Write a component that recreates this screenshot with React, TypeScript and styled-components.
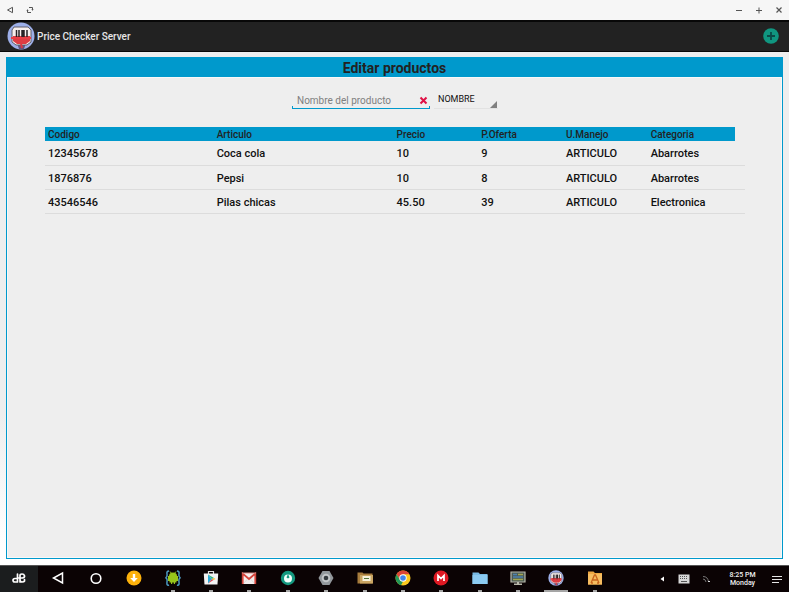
import React, { useState } from "react";
import styled, { createGlobalStyle } from "styled-components";

const GlobalStyle = createGlobalStyle`
  *, *::before, *::after { box-sizing: border-box; }
  body { margin: 0; font-family: Roboto, "Noto Sans", sans-serif; background: #eeeeee; }
  button, input, select { font: inherit; color: inherit; }
  svg { display: block; }
`;

const blue = "#0099cc";

const Screen = styled.div`
  min-height: 100vh;
  display: flex;
  flex-direction: column;
  background: linear-gradient(#eeeeee 70%, #ffffff 92%);
`;

const PlainButton = styled.button`
  display: flex;
  align-items: center;
  justify-content: center;
  padding: 0;
  border: 0;
  background: none;
  cursor: pointer;
`;

const WindowBar = styled.header`
  height: 20px;
  flex: none;
  display: flex;
  align-items: center;
  justify-content: space-between;
  padding: 0 5px;
  background: #f6f6f6;
  color: #555555;
`;

const WindowGroup = styled.div`
  display: flex;
  gap: 10px;
`;

const WindowButton = styled(PlainButton)`
  width: 10px;
  height: 18px;
`;

const AppBar = styled.div`
  height: 32px;
  flex: none;
  display: flex;
  align-items: center;
  gap: 2px;
  padding: 0 10px 1px 7px;
  background: #222222;
  border-top: 2px solid #080808;
  border-bottom: 1px solid #080808;
`;

const AppTitle = styled.h1`
  margin: 0;
  padding-top: 2px;
  flex: 1;
  font-size: 10px;
  line-height: 12px;
  font-weight: 500;
  color: #e6e6e6;
`;

const Main = styled.main`
  flex: 1;
  display: flex;
  flex-direction: column;
  margin: 5px 6px 6px;
  border: 1px solid ${blue};
  background: #eeeeee;
`;

const PageTitle = styled.h2`
  margin: 0;
  height: 19px;
  line-height: 21px;
  background: ${blue};
  color: #222222;
  font-size: 14px;
  font-weight: 700;
  text-align: center;
`;

const PanelBody = styled.div`
  flex: 1;
  border: 1px solid #f8f8f8;
  padding: 14px 36px 14px 37px;
`;

const SearchForm = styled.form`
  display: flex;
  justify-content: center;
  gap: 4px;
  margin-bottom: 18px;
`;

const SearchField = styled.div`
  width: 138px;
  height: 17px;
  display: flex;
  align-items: center;
  border: 1px solid ${blue};
  border-top: 0;
  border-image: linear-gradient(transparent 85%, ${blue} 85%) 1;
`;

const SearchInput = styled.input`
  flex: 1;
  min-width: 0;
  height: 16px;
  padding: 0 4px;
  border: 0;
  outline: 0;
  background: none;
  font-size: 10px;
  color: #333333;
  &::placeholder { color: #808080; opacity: 1; }
`;

const ClearButton = styled(PlainButton)`
  width: 11px;
  height: 15px;
`;

const SelectWrap = styled.div`
  width: 64px;
  height: 17px;
  display: flex;
  align-items: flex-end;
  border-bottom: 1px solid #e2e2e2;
`;

const FieldSelect = styled.select`
  flex: 1;
  min-width: 0;
  height: 17px;
  padding: 0 0 1px 4px;
  border: 0;
  outline: 0;
  appearance: none;
  background: none;
  font-size: 9px;
  color: #111111;
`;

const ProductTable = styled.table`
  width: 100%;
  table-layout: fixed;
  border-collapse: collapse;
  text-align: left;
`;

const Col = styled.col<{ $width: string }>`
  width: ${(p) => p.$width};
`;

const HeadCell = styled.th`
  height: 14px;
  padding: 1px 3px 0;
  background: ${blue};
  color: #222222;
  font-size: 10px;
  line-height: 13px;
  font-weight: 500;
`;

const EndCell = styled.td`
  padding: 0;
`;

const Row = styled.tr`
  border-bottom: 1px solid #dcdcdc;
`;

const Cell = styled.td`
  height: 24px;
  padding: 2px 3px 0;
  font-size: 11px;
  line-height: 21px;
  font-weight: 500;
  color: #111111;
  white-space: nowrap;
`;

const TaskBar = styled.footer`
  height: 27px;
  flex: none;
  display: flex;
  background: #0b0304;
  border-top: 1px solid #555555;
`;

const TaskList = styled.nav`
  flex: 614;
  display: grid;
  grid-template-columns: repeat(16, 1fr);
`;

const TaskButton = styled(PlainButton)<{ $state?: "start" | "open" | "active" }>`
  position: relative;
  padding-bottom: 2px;
  background: ${(p) => (p.$state === "start" ? "#1b1d1e" : "none")};
  &::after {
    content: "";
    display: ${(p) => (p.$state === "open" || p.$state === "active" ? "block" : "none")};
    position: absolute;
    bottom: 0;
    width: ${(p) => (p.$state === "active" ? 24 : 4)}px;
    height: 2px;
    background: #a5a5a5;
  }
`;

const Tray = styled.div`
  flex: 171;
  display: flex;
  align-items: center;
  justify-content: flex-end;
  padding-right: 4px;
  color: #f0f0f0;
`;

const TrayButton = styled(PlainButton)<{ $width: number }>`
  width: ${(p) => p.$width}px;
  height: 26px;
`;

const Clock = styled.div`
  width: 51px;
  text-align: center;
  font-size: 7px;
  line-height: 8px;
  font-weight: 500;
`;

function ScannerLogo({ size }: { size: number }) {
  return (
    <svg width={size} height={size} viewBox="0 0 28 28" aria-hidden="true">
      <circle cx="14" cy="14" r="13.500" fill="#9dafe9" />
      <path d="M10 21h9l-2 6q-3 1-5 0z" fill="#65557c" />
      <path d="M7 5h14l3 3v12l-4 3H9l-4-3V8z" fill="#f7efee" stroke="#605f68" />
      <path d="M6 14h17v5l-4 3h-9l-4-3z" fill="#de3d43" />
      <path d="M9.500 8v9M12 8v9M20 8v9" stroke="#292326" strokeWidth="1.500" />
      <path d="M16 8v9" stroke="#292326" strokeWidth="3.500" />
      <path d="M4 16h20" stroke="#e93d45" strokeWidth="2" />
      <path d="M14 22l1 4" stroke="#dc3944" strokeWidth="2" />
    </svg>
  );
}

const icon = (children: React.ReactNode, size = 16) => (
  <svg width={size} height={size} viewBox="0 0 16 16" fill="none" aria-hidden="true">
    {children}
  </svg>
);

type Task = { name: string; state?: "start" | "open" | "active"; art: React.ReactNode };

const tasks: Task[] = [
  {
    name: "Inicio",
    state: "start",
    art: icon(
      <g stroke="#fff" strokeWidth="1.700" strokeLinecap="round" strokeLinejoin="round">
        <path d="M6.500 4v8M6.500 12H4Q2 12 2 10.300T4 8.500h2.500" />
        <path d="M9 12V5.500Q9 4 11 4t2.500 1.700T11.500 8H7M9 10q0 2 2 2t2.500-1V9.500" />
      </g>
    ),
  },
  { name: "Atrás", art: icon(<path d="M12.500 3v10L3.500 8z" stroke="#fff" strokeWidth="1.500" />) },
  { name: "Pantalla principal", art: icon(<circle cx="8" cy="8.500" r="4.800" stroke="#fff" strokeWidth="1.600" />) },
  {
    name: "Descargas",
    art: icon(
      <>
        <circle cx="8" cy="8" r="7.500" fill="#fcb10b" />
        <path d="M6.800 4h2.400v4h2.600L8 12 4.200 8h2.600z" fill="#fff" />
      </>
    ),
  },
  {
    name: "Editor Android",
    state: "open",
    art: icon(
      <>
        <path d="M4 1Q1.500 1 2 4t-1.500 4Q2.500 8 2 12t2 3M12 1q2.500 0 2 3t1.500 4Q13.500 8 14 12t-2 3" stroke="#4c9bc2" strokeWidth="1.500" />
        <path d="M4 6q0-3.500 4-3.500T12 6h1v5h-1.500v1.500H10V14H8.800v-1.500H7.200V14H6v-1.500H4.500V11H3V6z" fill="#98c51b" />
        <path d="M5 1.500L6.200 3M11 1.500L9.800 3" stroke="#98c51b" />
      </>
    ),
  },
  {
    name: "Tienda",
    state: "open",
    art: icon(
      <>
        <path d="M5.500 4V1.500h5V4" stroke="#ddd" strokeWidth="1.200" />
        <path d="M.8 3.500h14.400l-.7 11h-13z" fill="#f3f3f3" />
        <path d="M5 4.500v9l4-4.500z" fill="#2aaad8" />
        <path d="M5 4.500l6 3.500-2 1z" fill="#34b57a" />
        <path d="M5 13.500l4-4.500 1.500 1z" fill="#df4450" />
        <path d="M9 9l2-1 1.500 1-2 1z" fill="#fbc02d" />
      </>
    ),
  },
  {
    name: "Correo",
    state: "open",
    art: icon(
      <>
        <path d="M1 3h14v11H1z" fill="#f4eeee" />
        <path d="M1.700 14V3.600L8 9l6.300-5.400V14" stroke="#d4443b" strokeWidth="1.800" />
        <path d="M1 3h14" stroke="#d98a85" />
        <path d="M3 13l3.500-4M13 13L9.500 9" stroke="#ddd" />
      </>
    ),
  },
  {
    name: "Seguridad",
    state: "open",
    art: icon(
      <>
        <circle cx="8" cy="8" r="7.200" fill="#14987f" />
        <circle cx="8" cy="8.500" r="4" fill="#f2fffc" />
        <path d="M6.500 7.500L8 4l1.500 3.500L8 8.500z" fill="#14987f" />
      </>
    ),
  },
  {
    name: "Ajustes",
    state: "open",
    art: icon(
      <>
        <path d="M4.500 1h7L15.500 8l-4 7h-7L.5 8z" fill="#92979b" />
        <circle cx="8" cy="8" r="4.300" fill="#c2c5c7" />
        <circle cx="8" cy="8" r="2.300" fill="#343a3e" />
      </>
    ),
  },
  {
    name: "Explorador",
    state: "open",
    art: icon(
      <>
        <path d="M.5 2.500h5l1 1h9v10H.5z" fill="#a87d3d" />
        <path d="M3 5h13v8.500H3z" fill="#c9a563" />
        <path d="M5.500 6h8v5h-8z" fill="#f8f3dd" />
        <path d="M7 8.500h5" stroke="#55763f" />
      </>
    ),
  },
  {
    name: "Chrome",
    state: "open",
    art: icon(
      <>
        <circle cx="8" cy="8" r="7.500" fill="#fbc91f" />
        <path d="M1.500 4.300A7.500 7.500 0 0 1 14.500 4.300H8L5 9.500z" fill="#dc4437" />
        <path d="M1.500 4.300L5 9.700l3 1.800-2 3.700A7.500 7.500 0 0 1 1.500 4.300" fill="#219758" />
        <circle cx="8" cy="8" r="3.700" fill="#fff" />
        <circle cx="8" cy="8" r="2.800" fill="#4386ed" />
      </>
    ),
  },
  {
    name: "Mega",
    state: "open",
    art: icon(
      <>
        <circle cx="8" cy="8" r="7.500" fill="#de1923" />
        <path d="M5 11V5.500l3 3 3-3V11" stroke="#fff" strokeWidth="1.700" />
      </>
    ),
  },
  {
    name: "Archivos",
    state: "open",
    art: icon(
      <>
        <path d="M.5 2.500h6l1.500 1.500h7.500v10H.5z" fill="#78bae4" />
        <path d="M.5 5h15v9H.5z" fill="#8bcaf1" />
      </>
    ),
  },
  {
    name: "Monitor",
    state: "open",
    art: icon(
      <>
        <path d="M1 2h14v10H1z" fill="#4b5a55" stroke="#b8b8aa" strokeWidth="1.200" />
        <path d="M3 4.500h4M3 7h10" stroke="#4d82ae" strokeWidth="1.500" />
        <path d="M3 9.500h10M8 4.500h5" stroke="#a3a750" strokeWidth="1.500" />
        <path d="M7 12h2v1.500h3V15H4v-1.500h3z" fill="#b8b8aa" />
      </>
    ),
  },
  { name: "Price Checker Server", state: "active", art: <ScannerLogo size={16} /> },
  {
    name: "Carpeta de aplicaciones",
    state: "open",
    art: icon(
      <>
        <path d="M1 1.500h5.500L8 3h7v11.500H1z" fill="#efa842" />
        <path d="M1 4h14v10.500H1z" fill="#f7bd60" />
        <path d="M4 13l3.500-8h1L12 13M5.500 10h5M4 13h2M10 13h2" stroke="#c8641c" strokeWidth="1.300" />
      </>
    ),
  },
];

const columns = ["Codigo", "Articulo", "Precio", "P.Oferta", "U.Manejo", "Categoria"];
const widths = ["24.1%", "25.7%", "12.1%", "12.1%", "12.1%", "auto"];
const products = [
  ["12345678", "Coca cola", "10", "9", "ARTICULO", "Abarrotes"],
  ["1876876", "Pepsi", "10", "8", "ARTICULO", "Abarrotes"],
  ["43546546", "Pilas chicas", "45.50", "39", "ARTICULO", "Electronica"],
];

export default function App() {
  const [query, setQuery] = useState("");
  const [field, setField] = useState("NOMBRE");
  const column = field === "NOMBRE" ? 1 : 0;
  const visible = products.filter((p) => p[column].toLowerCase().includes(query.toLowerCase()));

  return (
    <Screen>
      <GlobalStyle />
      <WindowBar>
        <WindowGroup>
          <WindowButton aria-label="Atrás">
            <svg width="8" height="8" viewBox="0 0 8 8" fill="none" stroke="currentColor">
              <path d="M6.500 1.300v5.400L1.500 4z" />
            </svg>
          </WindowButton>
          <WindowButton aria-label="Girar ventana">
            <svg width="8" height="8" viewBox="0 0 8 8" fill="none" stroke="currentColor">
              <path d="M3 1.500h3.500V4M5 6.500H1.500V4" />
              <path d="M5.500 3.500l1 1 1-1M.5 4.500l1-1 1 1" strokeWidth="0.600" />
            </svg>
          </WindowButton>
        </WindowGroup>
        <WindowGroup>
          <WindowButton aria-label="Minimizar">
            <svg width="8" height="8" viewBox="0 0 8 8" stroke="currentColor"><path d="M1 4.500h6" /></svg>
          </WindowButton>
          <WindowButton aria-label="Maximizar">
            <svg width="8" height="8" viewBox="0 0 8 8" stroke="currentColor"><path d="M1 4.500h6M4 1.500v6" /></svg>
          </WindowButton>
          <WindowButton aria-label="Cerrar">
            <svg width="8" height="8" viewBox="0 0 8 8" stroke="currentColor"><path d="M1.500 1.500l5 5M6.500 1.500l-5 5" strokeWidth="1.200" /></svg>
          </WindowButton>
        </WindowGroup>
      </WindowBar>

      <AppBar>
        <ScannerLogo size={28} />
        <AppTitle>Price Checker Server</AppTitle>
        <PlainButton aria-label="Agregar producto">
          <svg width="16" height="16" viewBox="0 0 16 16">
            <circle cx="8" cy="8" r="7.800" fill="#109680" />
            <path d="M8 4v8M4 8h8" stroke="#0b4a47" strokeWidth="1.800" />
          </svg>
        </PlainButton>
      </AppBar>

      <Main>
        <PageTitle>Editar productos</PageTitle>
        <PanelBody>
          <SearchForm onSubmit={(e) => e.preventDefault()}>
            <SearchField>
              <SearchInput
                aria-label="Nombre del producto"
                placeholder="Nombre del producto"
                value={query}
                onChange={(e) => setQuery(e.target.value)}
              />
              <ClearButton type="button" aria-label="Borrar" onClick={() => setQuery("")}>
                <svg width="9" height="9" viewBox="0 0 9 9" stroke="#df1245" strokeWidth="2">
                  <path d="M1.500 1.500l6 6M7.500 1.500l-6 6" />
                </svg>
              </ClearButton>
            </SearchField>
            <SelectWrap>
              <FieldSelect aria-label="Buscar por" value={field} onChange={(e) => setField(e.target.value)}>
                <option>NOMBRE</option>
                <option>CODIGO</option>
              </FieldSelect>
              <svg width="8" height="8" viewBox="0 0 8 8" aria-hidden="true">
                <path d="M7 1v7H0z" fill="#808080" />
              </svg>
            </SelectWrap>
          </SearchForm>

          <ProductTable>
            <colgroup>
              {widths.map((w, i) => <Col key={i} $width={w} />)}
              <Col $width="10px" />
            </colgroup>
            <thead>
              <tr>
                {columns.map((c) => <HeadCell key={c} scope="col">{c}</HeadCell>)}
                <EndCell />
              </tr>
            </thead>
            <tbody>
              {visible.map((p) => (
                <Row key={p[0]}>
                  {p.map((value, i) => <Cell key={i}>{value}</Cell>)}
                  <EndCell />
                </Row>
              ))}
            </tbody>
          </ProductTable>
        </PanelBody>
      </Main>

      <TaskBar>
        <TaskList aria-label="Aplicaciones">
          {tasks.map((t) => (
            <TaskButton key={t.name} $state={t.state} aria-label={t.name}>{t.art}</TaskButton>
          ))}
        </TaskList>
        <Tray>
          <TrayButton $width={20} aria-label="Mostrar iconos">
            <svg width="4" height="6" viewBox="0 0 4 6"><path d="M4 .5v5L.5 3z" fill="#fff" /></svg>
          </TrayButton>
          <TrayButton $width={23} aria-label="Teclado">
            <svg width="12" height="10" viewBox="0 0 12 10">
              <rect x=".5" y=".5" width="11" height="9" fill="#d8d8d8" />
              <path d="M2 2.500h8M2 4.500h8" stroke="#555" strokeDasharray="1 1" />
              <path d="M3 7.500h6" stroke="#555" />
            </svg>
          </TrayButton>
          <TrayButton $width={22} aria-label="Red">
            <svg width="8" height="8" viewBox="0 0 8 8" fill="none" stroke="#777">
              <path d="M1 1.500q5 0 5.500 5.500M1 4q2.500 0 3 3" />
              <path d="M6 6.500h2" stroke="#ddd" />
            </svg>
          </TrayButton>
          <Clock>8:25 PM<br />Monday</Clock>
          <TrayButton $width={17} aria-label="Notificaciones">
            <svg width="10" height="9" viewBox="0 0 10 9" stroke="#e5e5e5" strokeWidth="1">
              <path d="M0 1.500h10M0 4.500h10M0 7.500h7" />
            </svg>
          </TrayButton>
        </Tray>
      </TaskBar>
    </Screen>
  );
}
